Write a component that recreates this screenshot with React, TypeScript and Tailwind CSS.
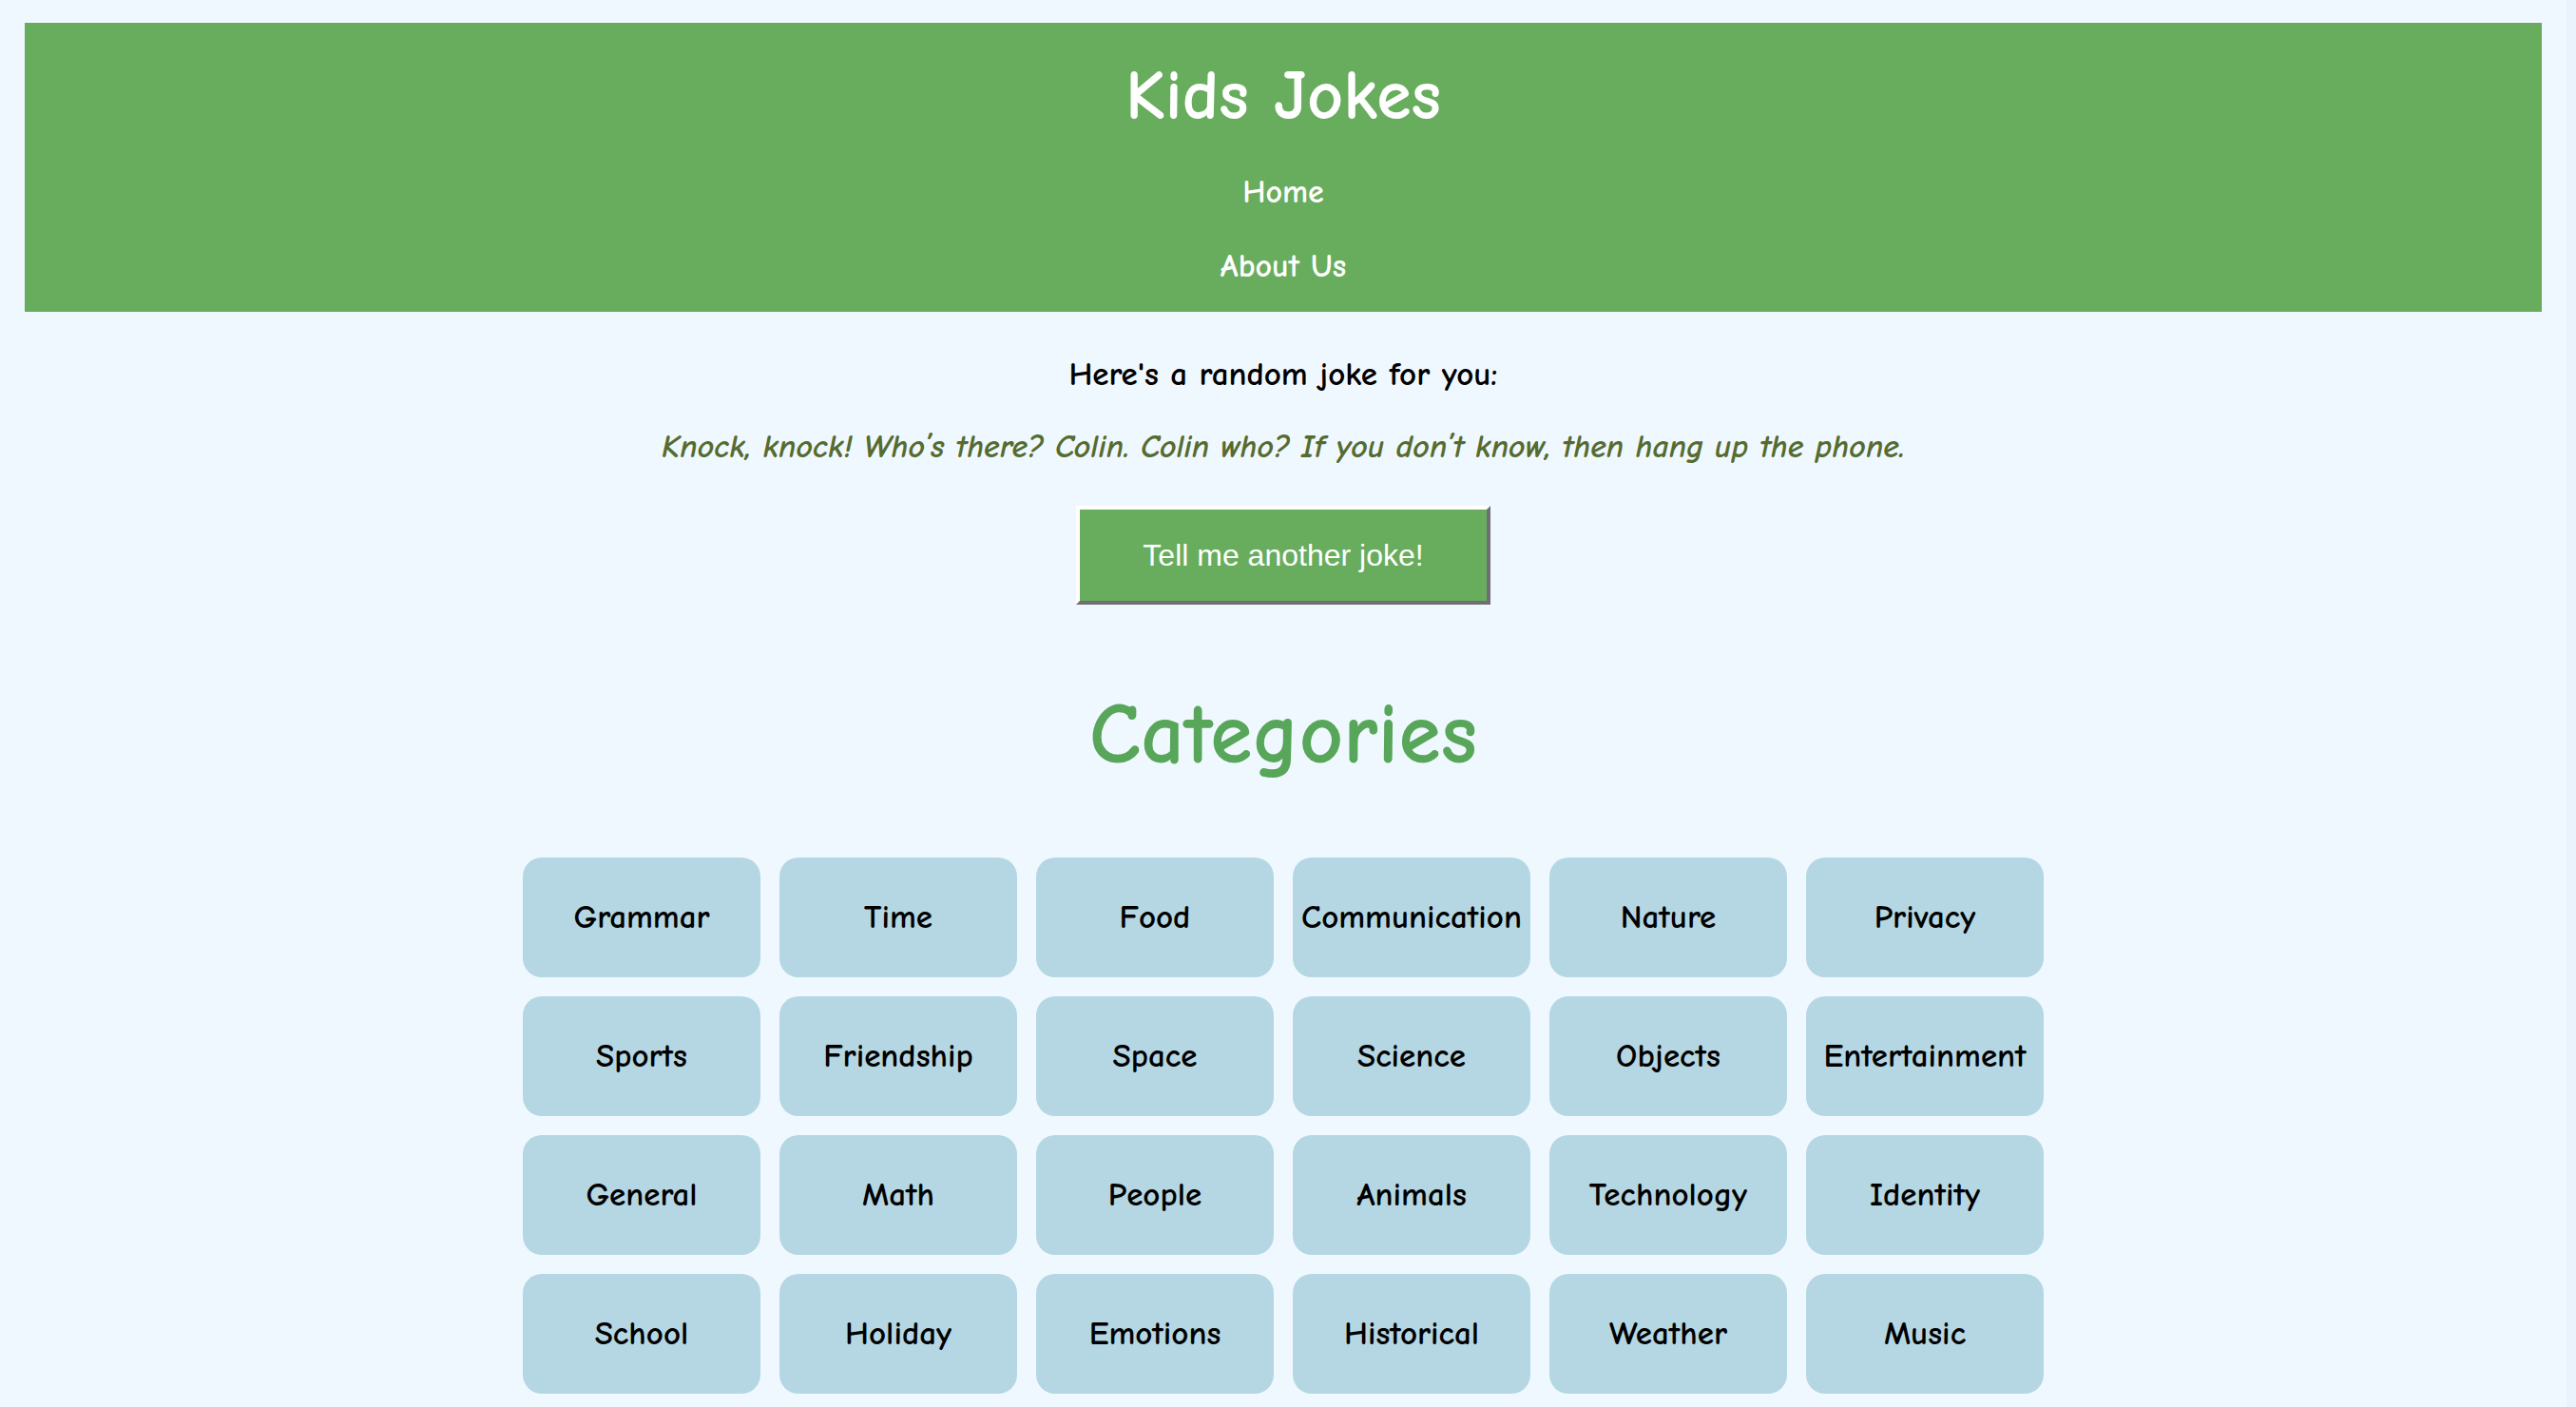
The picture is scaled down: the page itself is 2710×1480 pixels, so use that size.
import { useState } from 'react';

// Joke list used by the "Tell me another joke!" button
const JOKES = [
  'Knock, knock! Who’s there? Colin. Colin who? If you don’t know, then hang up the phone.',
  'Why did the math book look sad? Because it had too many problems.',
  'What do you call a bear with no teeth? A gummy bear!',
];

const CATEGORIES = [
  'Grammar', 'Time', 'Food', 'Communication', 'Nature', 'Privacy',
  'Sports', 'Friendship', 'Space', 'Science', 'Objects', 'Entertainment',
  'General', 'Math', 'People', 'Animals', 'Technology', 'Identity',
  'School', 'Holiday', 'Emotions', 'Historical', 'Weather', 'Music',
];

const comic = { fontFamily: '"Comic Sans MS", "Comic Neue", "Noto Sans", sans-serif' };

export default function App() {
  const [idx, setIdx] = useState(0);

  return (
    <div className="min-h-screen flex bg-[#f0f8ff]" style={comic}>
      <div className="flex-1 pt-[24px] pb-[15px] overflow-hidden">
        <header className="mx-[26px] h-[304px] bg-[#68ad5d] flex flex-col items-center text-white">
          <h1 className="mt-[37px] h-[80px] flex items-center text-[74px] font-black leading-none">Kids Jokes</h1>
          <nav className="flex flex-col items-center">
            <a className="mt-[36px] h-[50px] flex items-center text-[34px] font-bold cursor-pointer">Home</a>
            <a className="mt-[28px] h-[50px] flex items-center text-[34px] font-bold cursor-pointer">About Us</a>
          </nav>
        </header>

        <main className="flex flex-col items-center">
          <p className="mt-[46px] h-[40px] flex items-center text-[35px] font-bold text-black">Here's a random joke for you:</p>
          <p className="mt-[36px] h-[40px] flex items-center text-[34px] font-bold italic text-[#556b2f]">{JOKES[idx]}</p>
          <button
            onClick={() => setIdx((idx + 1) % JOKES.length)}
            className="mt-[42px] w-[436px] h-[104px] bg-[#68ad5d] text-white text-[32px] font-['Liberation_Sans',Arial,sans-serif] border-4 border-t-white border-l-white border-r-[#6e6e73] border-b-[#6e6e73]"
          >
            Tell me another joke!
          </button>

          <h2 className="mt-[87px] h-[100px] flex items-center text-[90px] font-black text-[#57a65a]">Categories</h2>

          <div className="mt-[79px] grid grid-cols-[repeat(6,250px)] auto-rows-[126px] gap-[20px]">
            {CATEGORIES.map((c) => (
              <div
                key={c}
                className="rounded-[20px] bg-[#b5d7e3] flex items-center justify-center text-[35px] font-bold text-black whitespace-nowrap cursor-pointer"
              >
                {c}
              </div>
            ))}
          </div>
        </main>
      </div>
      <div className="w-[10px] bg-[#ebf2fb]" />
    </div>
  );
}
